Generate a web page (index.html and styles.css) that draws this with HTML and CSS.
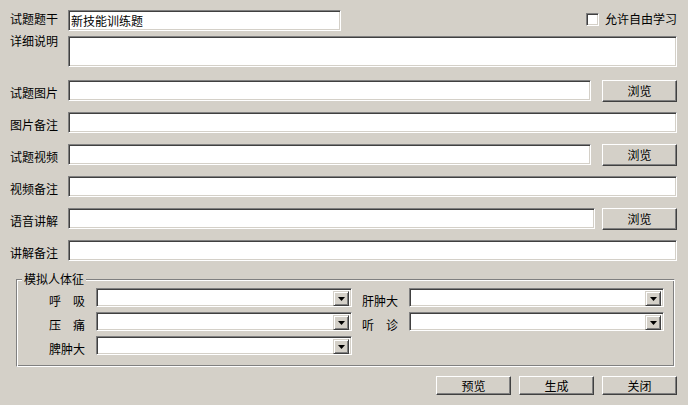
FILE: index.html
```html
<!DOCTYPE html>
<html lang="zh-CN">
<head>
<meta charset="utf-8">
<title>试题编辑</title>
<link rel="stylesheet" href="styles.css">
</head>
<body>
<div class="form">
  <div class="row row-title">
    <span class="label label-title">试题题干</span>
    <div class="field field-title">新技能训练题</div>
    <label class="free">
      <span class="checkbox"></span>
      <span class="free-text">允许自由学习</span>
    </label>
  </div>
  <div class="row row-detail">
    <span class="label label-detail">详细说明</span>
    <div class="field field-area"></div>
  </div>
  <div class="row row-line first-line">
    <span class="label">试题图片</span>
    <div class="field field-grow"></div>
    <button class="btn btn-browse">浏览</button>
  </div>
  <div class="row row-line">
    <span class="label">图片备注</span>
    <div class="field field-grow"></div>
  </div>
  <div class="row row-line">
    <span class="label">试题视频</span>
    <div class="field field-grow"></div>
    <button class="btn btn-browse">浏览</button>
  </div>
  <div class="row row-line">
    <span class="label">视频备注</span>
    <div class="field field-grow"></div>
  </div>
  <div class="row row-line">
    <span class="label">语音讲解</span>
    <div class="field field-grow"></div>
    <button class="btn btn-browse btn-near">浏览</button>
  </div>
  <div class="row row-line">
    <span class="label">讲解备注</span>
    <div class="field field-grow"></div>
  </div>

  <div class="group">
    <span class="legend">模拟人体征</span>
    <div class="group-grid">
      <span class="glabel">呼　吸</span>
      <div class="combo"><span class="combo-btn"><svg width="7" height="4" viewBox="0 0 7 4"><polygon points="0,0 7,0 3.5,4" fill="#000"/></svg></span></div>
      <span class="glabel">肝肿大</span>
      <div class="combo"><span class="combo-btn"><svg width="7" height="4" viewBox="0 0 7 4"><polygon points="0,0 7,0 3.5,4" fill="#000"/></svg></span></div>
      <span class="glabel">压　痛</span>
      <div class="combo"><span class="combo-btn"><svg width="7" height="4" viewBox="0 0 7 4"><polygon points="0,0 7,0 3.5,4" fill="#000"/></svg></span></div>
      <span class="glabel">听　诊</span>
      <div class="combo"><span class="combo-btn"><svg width="7" height="4" viewBox="0 0 7 4"><polygon points="0,0 7,0 3.5,4" fill="#000"/></svg></span></div>
      <span class="glabel">脾肿大</span>
      <div class="combo"><span class="combo-btn"><svg width="7" height="4" viewBox="0 0 7 4"><polygon points="0,0 7,0 3.5,4" fill="#000"/></svg></span></div>
    </div>
  </div>

  <div class="actions">
    <button class="btn btn-action">预览</button>
    <button class="btn btn-action">生成</button>
    <button class="btn btn-action">关闭</button>
  </div>
</div>
</body>
</html>
```
FILE: styles.css
```css
html, body {
  margin: 0;
  padding: 0;
}
body {
  width: 688px;
  height: 405px;
  background: #d4d0c8;
  color: #000;
  font-family: "Noto Sans CJK SC", "Noto Sans", sans-serif;
  font-size: 12px;
  line-height: 14px;
  overflow: hidden;
}
.form {
  padding: 10px 11px 0 10px;
}
.row {
  display: flex;
  align-items: flex-start;
}
.label {
  flex: 0 0 58px;
  width: 58px;
  white-space: nowrap;
  padding-top: 6px;
}
.label-title {
  padding-top: 2px;
}
.label-detail {
  padding-top: 0;
  margin-top: -2px;
}
.field {
  box-sizing: border-box;
  height: 21px;
  background: #fff;
  border: 1px solid;
  border-color: #808080 #fff #fff #808080;
  box-shadow: inset 1px 1px 0 #404040, inset -1px -1px 0 #d4d0c8;
  padding: 3px 0 0 2px;
  white-space: nowrap;
}
.field-title {
  width: 273px;
  flex: 0 0 273px;
}
.free {
  margin-left: auto;
  display: flex;
  align-items: center;
  margin-top: 2px;
}
.checkbox {
  box-sizing: border-box;
  width: 13px;
  height: 13px;
  background: #fff;
  border: 1px solid;
  border-color: #808080 #fff #fff #808080;
  box-shadow: inset 1px 1px 0 #404040, inset -1px -1px 0 #d4d0c8;
  margin-right: 6px;
}
.row-detail {
  margin-top: 5px;
}
.field-area {
  flex: 1;
  height: 31px;
}
.row-line {
  margin-top: 10px;
  height: 22px;
}
.first-line {
  margin-top: 13px;
}
.field-grow {
  flex: 1;
}
.btn {
  box-sizing: border-box;
  font-family: inherit;
  font-size: 12px;
  line-height: 14px;
  color: #000;
  background: #d4d0c8;
  border: 1px solid;
  border-color: #fff #404040 #404040 #fff;
  box-shadow: inset -1px -1px 0 #808080;
  padding: 0;
  margin: 0;
  border-radius: 0;
}
.btn-browse {
  width: 75px;
  height: 22px;
  margin-left: 11px;
}
.btn-near {
  margin-left: 7px;
}
.group {
  position: relative;
  box-sizing: border-box;
  margin: 17px 2px 0 6px;
  height: 88px;
  border: 1px solid;
  border-color: #808080 #fff #fff #808080;
  box-shadow: inset 1px 1px 0 #fff, inset -1px -1px 0 #808080;
  padding: 8px 0 0 32px;
}
.legend {
  position: absolute;
  top: -8px;
  left: 5px;
  padding: 0 2px;
  background: #d4d0c8;
}
.group-grid {
  display: grid;
  grid-template-columns: 37px 256px 37px 255px;
  grid-auto-rows: 19px;
  column-gap: 10px;
  row-gap: 5px;
  align-items: start;
}
.glabel {
  white-space: nowrap;
  padding-top: 6px;
}
.combo {
  position: relative;
  box-sizing: border-box;
  height: 19px;
  background: #fff;
  border: 1px solid;
  border-color: #808080 #fff #fff #808080;
  box-shadow: inset 1px 1px 0 #404040, inset -1px -1px 0 #d4d0c8;
  display: flex;
  justify-content: flex-end;
  padding: 2px 2px 2px 0;
}
.combo-btn {
  box-sizing: border-box;
  width: 16px;
  height: 15px;
  background: #d4d0c8;
  border: 1px solid;
  border-color: #d4d0c8 #404040 #404040 #d4d0c8;
  box-shadow: inset 1px 1px 0 #fff, inset -1px -1px 0 #808080;
  display: flex;
  align-items: center;
  justify-content: center;
}
.combo-btn svg {
  display: block;
  margin-top: 1px;
}
.actions {
  display: flex;
  justify-content: flex-end;
  gap: 8px;
  margin-top: 9px;
}
.btn-action {
  width: 75px;
  height: 19px;
}
```
